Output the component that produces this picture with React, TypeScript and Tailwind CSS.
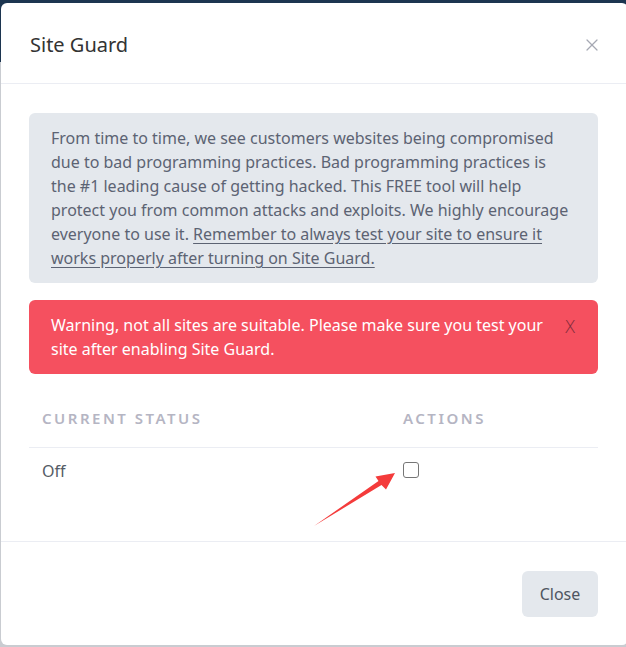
import { X } from "lucide-react"

export default function App() {
  return (
    <div
      className="w-[626px] h-[647px] overflow-hidden bg-[linear-gradient(to_bottom,#1c3550_0px,#1c3550_62px,#c9ccd1_62px)] pt-[3px] pl-[1px]"
      style={{ fontFamily: '"Noto Sans", "Open Sans", sans-serif' }}
    >
      <div className="relative flex flex-col w-[627px] h-[642px] bg-white rounded-[6px]">
        {/* header */}
        <div className="flex items-center justify-between h-[81px] pl-[29px] pr-[26px] border-b border-[#ebedf3]">
          <h2 className="text-[20px] leading-[28px] text-[#333] pt-[4px]">Site Guard</h2>
          <X className="w-[20px] h-[20px] text-[#a6a9b3] mt-[4px]" strokeWidth={1.5} />
        </div>

        {/* body */}
        <div className="flex-1 pl-[28px] pr-[30px] pt-[29px]">
          <div className="bg-[#e4e8ed] rounded-[6px] pl-[22px] pr-[24px] py-[13px] text-[16px] leading-[24px] text-[#5c6373]">
            From time to time, we see customers websites being compromised due to bad programming
            practices. Bad programming practices is the #1 leading cause of getting hacked. This FREE
            tool will help protect you from common attacks and exploits. We highly encourage everyone
            to use it.{" "}
            <span className="underline underline-offset-[3px]">
              Remember to always test your site to ensure it works properly after turning on Site Guard.
            </span>
          </div>

          <div className="flex items-start justify-between mt-[17px] bg-[#f5505f] rounded-[6px] pl-[22px] pr-[22px] py-[13px] text-[16px] leading-[24px] text-white">
            <p className="w-[500px]">
              Warning, not all sites are suitable. Please make sure you test your site after enabling
              Site Guard.
            </p>
            <span
              className="text-[17px] leading-[24px] text-[#7e2b3a] mt-[2px]"
              style={{ fontFamily: '"DejaVu Sans", sans-serif', fontWeight: 200 }}
            >
              X
            </span>
          </div>

          <div className="mt-[16px]">
            <div className="grid grid-cols-[361px_1fr] border-b border-[#ebedf3] pt-[18px] pb-[19px] text-[15px] leading-[20px] font-semibold tracking-[2.5px] text-[#b5b5c3]">
              <div className="pl-[13px]">CURRENT STATUS</div>
              <div className="pl-[13px]">ACTIONS</div>
            </div>
            <div className="grid grid-cols-[361px_1fr] pt-[11px] text-[16px] leading-[24px] text-[#555c66]">
              <div className="pl-[13px]">Off</div>
              <div className="pl-[13px] pt-[3px]">
                <div className="w-[16px] h-[16px] rounded-[3px] border border-[#767676] bg-white" />
              </div>
            </div>
          </div>
        </div>

        {/* footer */}
        <div className="flex justify-end border-t border-[#ebedf3] pl-[28px] pr-[30px] pt-[29px] pb-[28px]">
          <button className="w-[76px] h-[46px] bg-[#e4e8ed] rounded-[6px] text-[16px] text-[#4f5561]">
            Close
          </button>
        </div>

        {/* annotation arrow */}
        <svg className="absolute left-0 top-0 pointer-events-none" width="626" height="642" viewBox="1 3 626 642">
          <polygon
            points="314,526 378.5,481 375.5,476.5 395,473 386,489.5 381.5,485"
            fill="#f43b3b"
          />
        </svg>
      </div>
    </div>
  )
}
